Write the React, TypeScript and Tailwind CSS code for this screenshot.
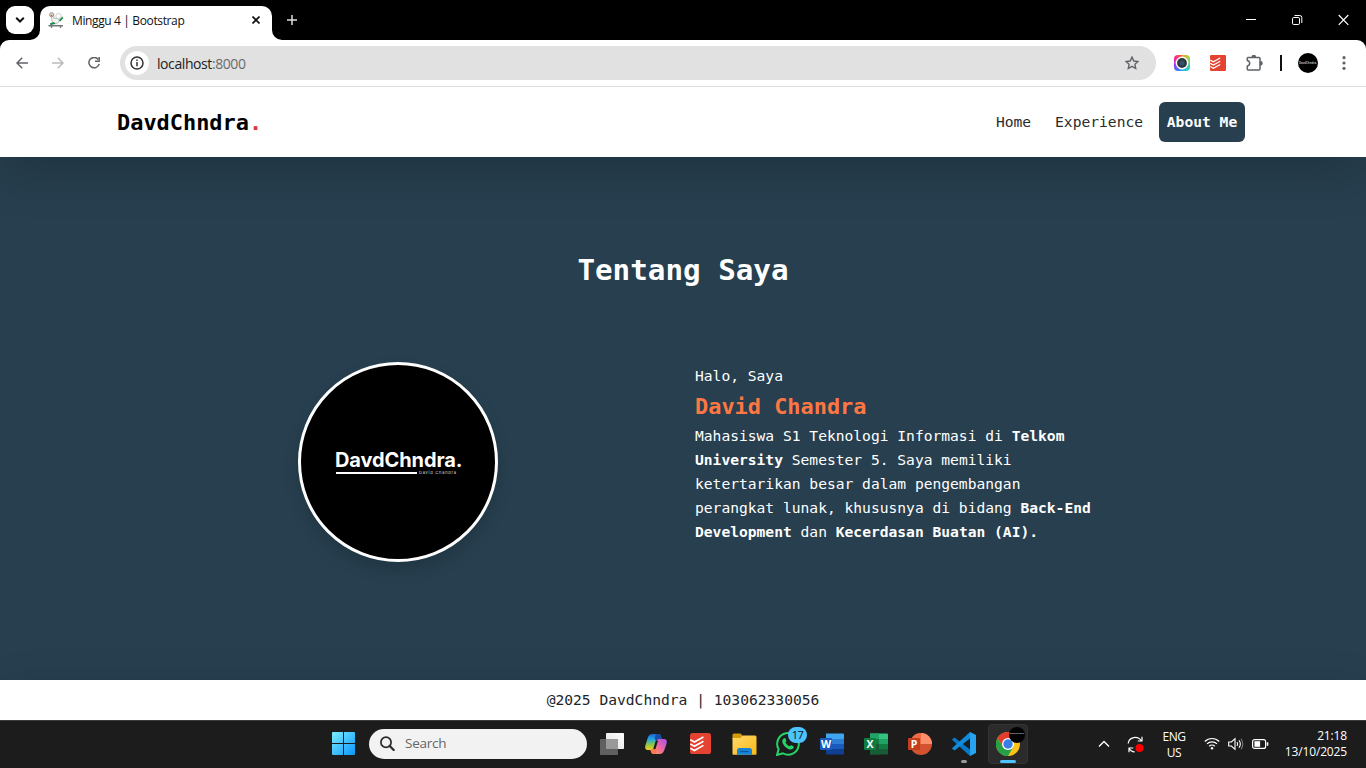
import React from "react";

const ui = "font-['Open_Sans','Noto_Sans',sans-serif]";
const mono = "font-['DejaVu_Sans_Mono','Liberation_Mono',monospace]";

function Caption() {
  return (
    <div className="flex h-10 shrink-0 bg-black">
      <div className="mt-[6px] ml-[6px] flex size-7 items-center justify-center rounded-[9px] bg-white">
        <svg width="10" height="8" viewBox="0 0 10 8" fill="none" stroke="#111" strokeWidth="2">
          <path d="M1.2 1.7 5 5.5l3.8-3.8" />
        </svg>
      </div>
      <svg className="mt-[30px] -ml-[4px]" width="10" height="10" viewBox="0 0 10 10">
        <path d="M10 0v10H0A10 10 0 0 0 10 0Z" fill="#fff" />
      </svg>
      <div className="mt-[6px] flex h-[34px] w-[232px] items-start rounded-t-[10px] bg-white pt-[6px] pl-2">
        <Skater />
        <span className="ml-[8px] w-[176px] text-[12px] leading-[17px] tracking-[-0.37px] whitespace-nowrap text-[#111]">
          Minggu 4 | Bootstrap
        </span>
        <svg className="mt-[4px] ml-[4px]" width="8" height="8" viewBox="0 0 8 8" stroke="#111" strokeWidth="1.7">
          <path d="m.5.5 7 7m0-7-7 7" />
        </svg>
      </div>
      <svg className="mt-[30px]" width="10" height="10" viewBox="0 0 10 10">
        <path d="M0 0v10h10A10 10 0 0 1 0 0Z" fill="#fff" />
      </svg>
      <svg className="mt-[15px] ml-[5px]" width="10" height="10" viewBox="0 0 10 10" stroke="#ddd" strokeWidth="1.5">
        <path d="M5 0v10M0 5h10" />
      </svg>
      <div className="mt-[14px] ml-auto flex items-start pr-[17px]">
        <svg className="mr-[36px]" width="10" height="12" viewBox="0 0 10 12" stroke="#fff">
          <path d="M0 5.500h10" />
        </svg>
        <svg className="mr-[35px]" width="11" height="12" viewBox="0 0 11 12" fill="none" stroke="#fff" strokeWidth="1">
          <rect x=".5" y="3.500" width="7" height="7" rx="1.3" />
          <path d="M2.500 1.500h5.300a2 2 0 0 1 2 2V9" />
        </svg>
        <svg width="11" height="12" viewBox="0 0 11 12" stroke="#fff" strokeWidth="1.2">
          <path d="m.7 1 9.6 9.800M10.300 1 .7 10.800" />
        </svg>
      </div>
    </div>
  );
}

function Skater() {
  return (
    <svg width="16" height="16" viewBox="0 0 16 16" fill="none">
      <path d="M3 3.5c1 4 .5 6.5 2.5 8 2.5 1 5-.5 5.5-3 .2-2.500-3-2.500-5-2L5.500 2Z" fill="#f4f4f4" stroke="#999" strokeWidth=".7" />
      <circle cx="3.600" cy="2.700" r="2.100" fill="#e5ddd6" stroke="#8b7a70" strokeWidth=".7" />
      <circle cx="3.500" cy="3.400" r=".9" fill="#cf6a1d" />
      <circle cx="10.500" cy="4" r="2.700" fill="#fff" stroke="#bbb" strokeWidth=".7" />
      <path d="m11 8 3.500-3.400.8 1.600L12 9.800Z" fill="#20924d" />
      <path d="M2 11.300 6 10l1.500 1.700-5 1.600Z" fill="#1d8a48" />
      <path d="M.5 13.800h14.500" stroke="#444" strokeWidth="1.100" />
      <circle cx="3.500" cy="15" r=".9" fill="#777" />
      <circle cx="12.500" cy="15" r=".9" fill="#777" />
    </svg>
  );
}

function Todoist({ size, rounded }: { size: number; rounded: number }) {
  return (
    <svg width={size} height={size} viewBox="0 0 20 20">
      <rect width="20" height="20" rx={rounded} fill="#e44332" />
      <g fill="none" stroke="#fff" strokeWidth="1.600">
        <path d="m.3 6.400 3.900 2.200 8.600-4.800" />
        <path d="m.3 10.400 3.900 2.200 8.600-4.800" />
        <path d="m.3 14.400 3.900 2.200 8.600-4.800" />
      </g>
    </svg>
  );
}

function MiniLogo() {
  return (
    <div className="flex size-5 items-center justify-center overflow-hidden rounded-full bg-black">
      <span className="text-[2.800px] leading-none font-bold text-[#bbb]">DavdChndra.</span>
    </div>
  );
}

function Toolbar() {
  return (
    <div className="relative z-10 shrink-0 bg-black">
      <div className="flex h-[47px] items-center rounded-t-[9px] border-b border-[#dcdcdc] bg-white">
        <svg className="ml-[16px]" width="12" height="12" viewBox="0 0 12 12" fill="none" stroke="#5f6368" strokeWidth="1.500">
          <path d="M12 6H1.200M6.200.8 1 6l5.200 5.200" />
        </svg>
        <svg className="ml-[24px]" width="12" height="12" viewBox="0 0 12 12" fill="none" stroke="#b8babc" strokeWidth="1.500">
          <path d="M0 6h10.800M5.800.8 11 6l-5.200 5.200" />
        </svg>
        <svg className="ml-[24px]" width="12" height="12" viewBox="0 0 12 12" fill="none" stroke="#5f6368" strokeWidth="1.500">
          <path d="M10.300 2.500A5.200 5.200 0 1 0 11.200 6.800" />
          <path d="M11.200 0v4.200H7" />
        </svg>
        <div className="ml-[20px] flex h-[34px] w-[1036px] items-center rounded-full bg-[#e1e1e1] pl-[5px]">
          <div className="flex size-6 items-center justify-center rounded-full bg-white">
            <svg width="14" height="14" viewBox="0 0 14 14" fill="none" stroke="#333" strokeWidth="1.500">
              <circle cx="7" cy="7" r="6" />
              <path d="M7 6v4.200M7 3.600v1.500" />
            </svg>
          </div>
          <span className="ml-2 text-[14px] tracking-[-0.420px] text-[#222]">
            localhost<span className="text-[#6b6b6b]">:8000</span>
          </span>
          <svg className="mr-[17px] ml-auto" width="14" height="14" viewBox="0 0 14 14" fill="none" stroke="#5f6368" strokeWidth="1.400">
            <path d="m7 1.100 1.800 3.900 4.200.5-3.100 2.800.8 4.200L7 10.400l-3.700 2.100.8-4.200L1 5.500 5.200 5Z" />
          </svg>
        </div>
        <div className="ml-[18px] flex size-4 items-center justify-center rounded-[4px] bg-[conic-gradient(#f7a51d,#a1d54c_15%,#41d6a4_30%,#22bdf0_48%,#4b6ff2_60%,#a835e8_72%,#fa2b83_85%,#ff5d45)]">
          <svg width="14" height="14" viewBox="0 0 14 14">
            <circle cx="7" cy="7" r="6.400" fill="#fff" />
            <circle cx="7" cy="7" r="4.900" fill="#30363c" />
            <circle cx="7" cy="7" r="2.500" fill="#34536a" />
          </svg>
        </div>
        <div className="ml-5">
          <Todoist size={16} rounded={1.5} />
        </div>
        <svg className="ml-[20px]" width="17" height="17" viewBox="0 0 17 17" fill="none" stroke="#5f6368" strokeWidth="1.500" strokeLinejoin="round">
          <path d="M2 2.500h11a1 1 0 0 1 1 1V14a1 1 0 0 1-1 1H2a.7.7 0 0 1-.7-.7V11c3.200-.8 3.200-4.700 0-5.400V3.200A.7.7 0 0 1 2 2.500Z" />
          <path d="M6.300 2a1.500 1.500 0 0 1 3 0ZM14.500 6.800a1.500 1.500 0 0 1 0 3Z" fill="#5f6368" />
        </svg>
        <div className="ml-[17px] h-4 w-[2px] bg-[#111]" />
        <div className="ml-[16px]">
          <MiniLogo />
        </div>
        <svg className="ml-[24px]" width="4" height="14" viewBox="0 0 4 14" fill="#5f6368">
          <circle cx="2" cy="1.700" r="1.600" />
          <circle cx="2" cy="7" r="1.600" />
          <circle cx="2" cy="12.300" r="1.600" />
        </svg>
      </div>
    </div>
  );
}

function SiteHeader() {
  return (
    <header className={`${mono} relative flex h-[70px] shrink-0 items-center justify-between bg-white pr-[121px] pl-[117px] shadow-[0_16px_48px_rgba(0,0,0,0.175)]`}>
      <div className="pt-[2px] text-[21.920px] font-bold text-black">
        DavdChndra<span className="text-[#dc3545]">.</span>
      </div>
      <nav className="flex items-center gap-2 text-[14.610px] text-[#2b2b2b]">
        <a className="px-2">Home</a>
        <a className="px-2">Experience</a>
        <a className="flex h-10 items-center rounded-[6px] bg-[#273f4f] px-[7.800px] font-bold text-white">About Me</a>
      </nav>
    </header>
  );
}

function About() {
  return (
    <main className={`${mono} flex grow flex-col bg-[#273f4f] text-white`}>
      <h1 className="mt-[94px] text-center text-[29.230px] leading-[38px] font-bold">Tentang Saya</h1>
      <div className="mt-[73px] flex">
        <div className="ml-[298px] flex size-[200px] flex-col items-center justify-center rounded-full border-[3px] border-white bg-black font-['Inter',sans-serif] shadow-[0_8px_16px_rgba(0,0,0,0.15)]">
          <div className="mt-[2px] h-[19px] w-[126px] text-[20px] leading-[19px] font-bold tracking-[-0.100px] whitespace-nowrap">DavdChndra.</div>
          <div className="mt-px flex h-[4px] w-[124px] items-center">
            <div className="h-[2px] w-[81px] bg-white" />
            <span className="ml-[2px] text-[4px] leading-[4px] tracking-[0.750px] whitespace-nowrap text-[#ddd]">David Chandra</span>
          </div>
        </div>
        <div className="mt-[2px] ml-[197px] text-[14.610px] leading-6">
          <p>Halo, Saya</p>
          <h2 className="mt-[3px] mb-px text-[21.920px] leading-8 font-bold text-[#fe7743]">David Chandra</h2>
          <p className="w-[410px]">
            Mahasiswa S1 Teknologi Informasi di <b>Telkom</b>
            <br />
            <b>University</b> Semester 5. Saya memiliki
            <br />
            ketertarikan besar dalam pengembangan
            <br />
            perangkat lunak, khususnya di bidang <b>Back-End</b>
            <br />
            <b>Development</b> dan <b>Kecerdasan Buatan (AI).</b>
          </p>
        </div>
      </div>
    </main>
  );
}

function Office({ letter, colors }: { letter: string; colors: string[] }) {
  return (
    <svg width="24" height="24" viewBox="0 0 24 24">
      <path d="M6 1.500h17a1 1 0 0 1 1 1V7H6Z" fill={colors[0]} />
      <path d="M6 7h18v5H6Z" fill={colors[1]} />
      <path d="M6 12h18v5H6Z" fill={colors[2]} />
      <path d="M6 17h18v4.500a1 1 0 0 1-1 1H6Z" fill={colors[3]} />
      {letter === "X" && (
        <>
          <path d="M6 1.500h9V12H6Z" fill="#21a366" />
          <path d="M6 7h9v5H6Z" fill="#107c41" />
          <path d="M6 12h9v10.500H6Z" fill="#185c37" />
        </>
      )}
      <rect y="6" width="12" height="12" rx="1" fill={colors[4]} />
      <text x="6" y="15.600" textAnchor="middle" fontSize="10.500" fontWeight="bold" fill="#fff">
        {letter}
      </text>
    </svg>
  );
}

function Slot({ children }: { children: React.ReactNode }) {
  return <div className="flex h-10 w-11 items-center justify-center">{children}</div>;
}

function Taskbar() {
  return (
    <div className="flex h-12 shrink-0 items-center border-t border-[#3a3a3a] bg-[#1c1c1c] pb-[2px] text-white">
      <svg className="ml-[332px]" width="23" height="23" viewBox="0 0 23 23">
        <defs>
          <linearGradient id="win" x1="0" y1="0" x2="23" y2="23" gradientUnits="userSpaceOnUse">
            <stop stopColor="#7cecff" />
            <stop offset="1" stopColor="#0a96fb" />
          </linearGradient>
        </defs>
        <path d="M0 1a1 1 0 0 1 1-1h10v11H0ZM12 0h10a1 1 0 0 1 1 1v10H12ZM0 12h11v11H1a1 1 0 0 1-1-1ZM12 12h11v10a1 1 0 0 1-1 1H12Z" fill="url(#win)" />
      </svg>
      <div className="ml-[14px] flex h-[30px] w-[218px] items-center rounded-full bg-[#f2f2f2] pl-[11px]">
        <svg width="15" height="15" viewBox="0 0 15 15" fill="none" stroke="#2a2a2a" strokeWidth="1.700">
          <circle cx="6" cy="6.200" r="5.100" />
          <path d="m9.700 10 4 4" strokeWidth="2.200" strokeLinecap="round" />
        </svg>
        <span className="ml-[10px] text-[13.500px] tracking-[-0.250px] text-[#666]">Search</span>
      </div>
      <div className="ml-[3px] flex items-center">
        <Slot>
          <svg width="24" height="22" viewBox="0 0 24 22">
            <defs>
              <linearGradient id="tv" x1="0" y1="1" x2="1" y2="0">
                <stop stopColor="#dedede" />
                <stop offset="1" stopColor="#fff" />
              </linearGradient>
            </defs>
            <rect x="6" width="18" height="16" rx=".8" fill="url(#tv)" />
            <rect y="6" width="18" height="16" rx=".8" fill="#606060" />
            <path d="M6 6h12v10H6Z" fill="#999" />
          </svg>
        </Slot>
        <Slot>
          <svg width="24" height="22" viewBox="0 0 24 22">
            <defs>
              <linearGradient id="cpa" x1="0" y1="0" x2="0" y2="1">
                <stop stopColor="#1a65d6" />
                <stop offset=".35" stopColor="#25a9df" />
                <stop offset=".65" stopColor="#87c64b" />
                <stop offset="1" stopColor="#f5cf20" />
              </linearGradient>
              <linearGradient id="cpb" x1="1" y1="0" x2="0" y2="1">
                <stop stopColor="#a250ee" />
                <stop offset=".5" stopColor="#ef67a0" />
                <stop offset="1" stopColor="#ffa34c" />
              </linearGradient>
            </defs>
            <path d="M8.500 1H14c2 0 2.700 1.300 3.200 3l.5 2h-2.500c-1.700 0-2.400.9-2.900 2.500l-1.600 5.200C10.100 15.600 9 17 6.500 17H4C1 17 .8 14.500 1.500 12l2.200-7C4.500 2.300 6 1 8.500 1Z" fill="url(#cpa)" />
            <path d="M12 1h2c2 0 2.700 1.300 3.200 3l.5 2h-2.500c-1.700 0-2.400.9-2.900 2.500L10.500 5Z" fill="#174ca9" />
            <path d="M15.500 21H10c-2 0-2.700-1.300-3.200-3l-.3-1c2.500 0 3.600-1.400 4.200-3.300l1.600-5.200C12.800 6.900 13.500 6 15.200 6H20c3 0 3.200 2.500 2.500 5l-2.200 6c-.8 2.700-2.300 4-4.800 4Z" fill="url(#cpb)" />
            <path d="M6.500 17c2.500 0 3.600-1.400 4.200-3.300L13 17l-1.500 4H10c-2 0-2.700-1.300-3.200-3Z" fill="#ff7653" />
            <path d="M10.300 16 13 7.500" stroke="#1c1c1c" strokeWidth="2.200" />
          </svg>
        </Slot>
        <Slot>
          <Todoist size={21} rounded={2.5} />
        </Slot>
        <Slot>
          <svg width="25" height="22" viewBox="0 0 25 22">
            <defs>
              <linearGradient id="fld" x1="0" y1="0" x2="1" y2="1">
                <stop stopColor="#ffd96a" />
                <stop offset="1" stopColor="#fbb916" />
              </linearGradient>
            </defs>
            <path d="M.5 2A1.500 1.500 0 0 1 2 .5h6.500l2 2V6H.5Z" fill="#d49a09" />
            <path d="M.5 5h7.700l2.600-2.500H23A1.500 1.500 0 0 1 24.500 4v17a.7.7 0 0 1-.7.7H1.200a.7.7 0 0 1-.7-.7Z" fill="url(#fld)" />
            <path d="M5 17.500a2.500 2.500 0 0 1 2.500-2.500h10a2.500 2.500 0 0 1 2.500 2.500V21.700H5Z" fill="#1684d8" />
            <path d="M8.500 18.500h8" stroke="#0a559b" strokeWidth="1.200" />
          </svg>
        </Slot>
        <div className="relative">
          <Slot>
            <svg width="24" height="24" viewBox="0 0 24 24" fill="none">
              <path d="m1 23 1.600-5.800A10.800 10.800 0 1 1 6.900 21.400Z" stroke="#25d366" strokeWidth="2" />
              <path d="M7.600 6.500c.6-.7 1.500-.6 1.800.1l.9 2c.3.800-.9 1.500-.7 2 .9 1.700 2 2.800 3.800 3.600.6.200 1.200-1.200 1.900-.9l2 1c.7.400.6 1.300 0 2-1.200 1.500-3.300 1.400-5 .6-2.700-1.200-4.600-3.300-5.700-5.900-.6-1.600-.3-3.300 1-4.500Z" fill="#25d366" />
            </svg>
          </Slot>
          <div className="absolute top-[3px] left-[22px] flex h-4 w-[19px] items-center justify-center rounded-full bg-[#4cc2ff] text-[11px] leading-none tracking-[-0.500px] text-[#111]">
            17
          </div>
        </div>
        <Slot>
          <Office letter="W" colors={["#41a5ee", "#2b7cd3", "#185abd", "#103f91", "#185abd"]} />
        </Slot>
        <Slot>
          <Office letter="X" colors={["#33c481", "#21a366", "#107c41", "#185c37", "#107c41"]} />
        </Slot>
        <Slot>
          <svg width="24" height="24" viewBox="0 0 24 24">
            <circle cx="13" cy="12" r="11" fill="#d35230" />
            <path d="M13 1a11 11 0 0 1 11 11H13Z" fill="#ff8f6b" />
            <path d="M13 1A11 11 0 0 0 2 12h11Z" fill="#ed6c47" />
            <rect y="6" width="12" height="12" rx="1" fill="#c43e1c" />
            <text x="6" y="15.600" textAnchor="middle" fontSize="10.500" fontWeight="bold" fill="#fff">
              P
            </text>
          </svg>
        </Slot>
        <div className="relative">
          <Slot>
            <svg width="24" height="24" viewBox="0 0 24 24">
              <path d="M18 24 .5 8.300a.8.8 0 0 1 0-1.200l1.300-1.200a1 1 0 0 1 1.300 0L18 17.500Z" fill="#0879c9" />
              <path d="M18 0 .5 15.700a.8.8 0 0 0 0 1.200l1.300 1.200a1 1 0 0 0 1.300 0L18 6.500Z" fill="#118bda" />
              <path d="M18 0 24 3v18l-6 3Z" fill="#28a3ef" />
            </svg>
          </Slot>
          <div className="absolute bottom-[1px] left-[19px] h-[3px] w-[6px] rounded-full bg-[#9a9a9a]" />
        </div>
        <div className="relative mx-[2px] flex size-10 items-center justify-center rounded-[4px] border border-[#343434] bg-[#2b2b2b]">
          <svg width="24" height="24" viewBox="0 0 24 24">
            <circle cx="12" cy="12" r="12" fill="#fcc31b" />
            <path d="M1.600 6A12 12 0 0 1 22.400 6H12l-5.200 9Z" fill="#e33b2e" />
            <path d="M1.600 6A12 12 0 0 0 12 24l5.200-9-5.200 3-5.200-3Z" fill="#24a047" />
            <circle cx="12" cy="12" r="6" fill="#fff" />
            <circle cx="12" cy="12" r="4.700" fill="#397de6" />
          </svg>
          <div className="absolute top-[2px] left-[20px] flex size-4 items-center justify-center overflow-hidden rounded-full bg-black text-[2.300px] leading-none font-bold text-[#bbb]">
            DavdChndra.
          </div>
          <div className="absolute bottom-0 left-[11px] h-[3px] w-4 rounded-full bg-[#4cc2ff]" />
        </div>
      </div>
      <div className="ml-auto flex items-center pr-[18px]">
        <svg width="12" height="8" viewBox="0 0 12 8" fill="none" stroke="#fff" strokeWidth="1.400">
          <path d="m1 6.500 5-5 5 5" />
        </svg>
        <svg className="mt-[1px] ml-[17px]" width="17" height="17" viewBox="0 0 17 17" fill="none" stroke="#fff" strokeWidth="1.200">
          <path d="M1.200 7.500C2 .7 10.800-.6 14.500 5M15 .800V5h-4.300" />
          <path d="M2 16.300v-4.300h4.300M2 12c1 2.300 3 3.700 5.800 4" />
          <circle cx="12.500" cy="12" r="4" fill="red" stroke="none" />
        </svg>
        <div className="mt-[2px] ml-[14px] flex w-[32px] flex-col items-center text-[12px] leading-4 tracking-[-0.450px]">
          <span>ENG</span>
          <span>US</span>
        </div>
        <svg className="ml-[14px]" width="16" height="13" viewBox="0 0 16 13" fill="none" stroke="#fff" strokeWidth="1.200">
          <path d="M.8 4.500a10.200 10.200 0 0 1 14.400 0M3 6.900a7 7 0 0 1 10 0M5.200 9.300a4 4 0 0 1 5.600 0" />
          <circle cx="8" cy="11.200" r="1.200" fill="#fff" stroke="none" />
        </svg>
        <svg className="ml-[8px]" width="16" height="14" viewBox="0 0 16 14" fill="none" stroke="#fff" strokeWidth="1.100">
          <path d="M.700 5v4h2.700L7 12.300V1.700L3.400 5Z" />
          <path d="M9 5q1.400 2 0 4M11 3.300q2.700 3.700 0 7.400" />
          <path d="M13 1.700q3.700 5.300 0 10.600" stroke="#777" />
        </svg>
        <svg className="ml-[8px]" width="17" height="10" viewBox="0 0 17 10" fill="none" stroke="#fff" strokeWidth="1.200">
          <rect x=".6" y=".6" width="13" height="8.800" rx="2" />
          <path d="M3 2.800h4.500v4.400H3Z" fill="#fff" />
          <path d="M15.500 3.300v3.400" strokeWidth="1.600" />
        </svg>
        <div className="ml-[10px] flex w-[69px] flex-col items-end text-[12px] leading-4 tracking-[-0.150px] whitespace-nowrap">
          <span className="pr-px">21:18</span>
          <span className="pr-px">13/10/2025</span>
        </div>
      </div>
    </div>
  );
}

export default function App() {
  return (
    <div className={`${ui} flex h-[768px] w-[1366px] flex-col overflow-hidden bg-white`}>
      <Caption />
      <Toolbar />
      <SiteHeader />
      <About />
      <footer className={`${mono} flex h-10 shrink-0 items-center justify-center bg-white text-[14.610px] text-[#212529] shadow-[0_16px_48px_rgba(0,0,0,0.175)]`}>
        @2025 DavdChndra | 103062330056
      </footer>
      <Taskbar />
    </div>
  );
}
